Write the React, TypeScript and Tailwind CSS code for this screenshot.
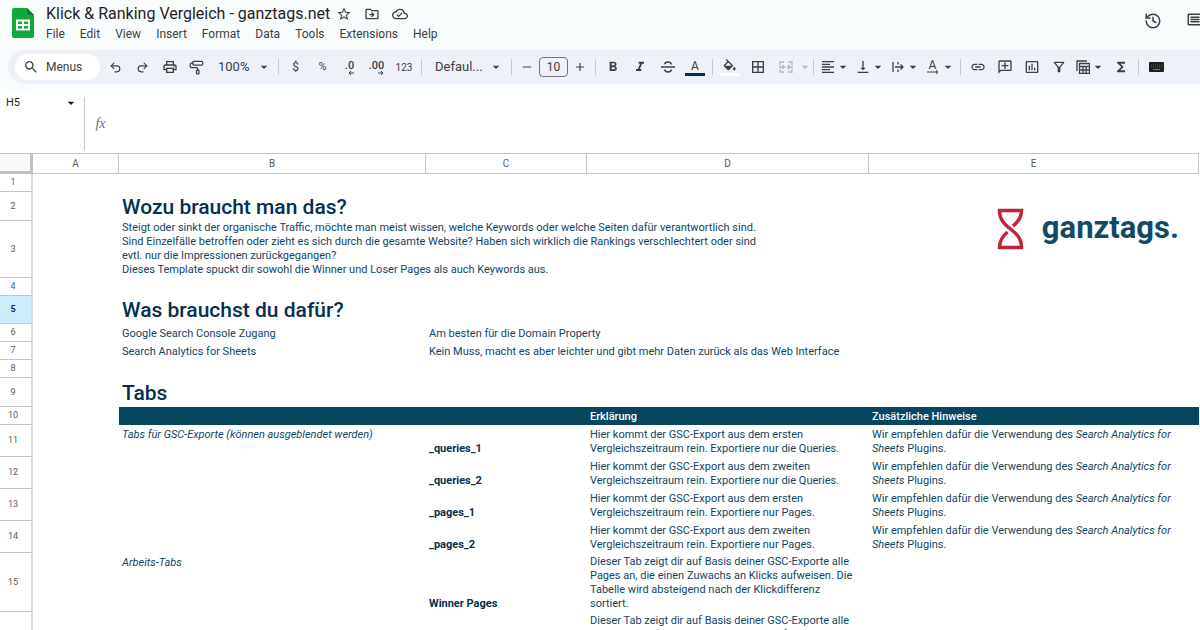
import type { ReactNode } from "react";
import { History, PaintRoller, Redo2, Undo2 } from "lucide-react";
import {
  MdAdd,
  MdArrowDropDown,
  MdBorderAll,
  MdFormatAlignLeft,
  MdFormatBold,
  MdFormatItalic,
  MdFunctions,
  MdInsertChartOutlined,
  MdLink,
  MdOutlineAddComment,
  MdOutlineCloudDone,
  MdOutlineComment,
  MdOutlineDriveFileMove,
  MdOutlineFilterAlt,
  MdOutlinePrint,
  MdRemove,
  MdSearch,
  MdStarOutline,
  MdVerticalAlignBottom,
} from "react-icons/md";

const menus = ["File", "Edit", "View", "Insert", "Format", "Data", "Tools", "Extensions", "Help"];

export default function App() {
  return (
    <div className="h-screen overflow-hidden bg-white font-[Roboto,sans-serif] text-[#1f1f1f]">
      <div className="bg-[#f9fcfd] pb-[7px]">
        <Header />
        <Toolbar />
      </div>
      <FormulaBar />
      <Sheet />
    </div>
  );
}

const Header = () => (
  <header className="flex h-[50px] items-start pl-3">
    <SheetsLogo />
    <div className="ml-3 flex-1">
      <div className="flex items-center pt-[3px]">
        <h1 className="text-[16px] leading-[22px]">Klick &amp; Ranking Vergleich - ganztags.net</h1>
        <div className="ml-[6px] flex items-center gap-3 text-[#3c4043]">
          <button aria-label="Star"><MdStarOutline className="size-4" /></button>
          <button aria-label="Move"><MdOutlineDriveFileMove className="size-4" /></button>
          <button aria-label="Document status"><MdOutlineCloudDone className="size-4" /></button>
        </div>
      </div>
      <nav className="flex gap-[15px] text-[12px] leading-[18px] text-[#3c4043]">
        {menus.map((m) => (
          <button key={m}>{m}</button>
        ))}
      </nav>
    </div>
    <div className="flex shrink-0 gap-6 overflow-hidden pt-3 text-[#3c4043]">
      <button aria-label="Version history"><History className="size-[18px]" /></button>
      <button aria-label="Comments" className="-mr-1"><MdOutlineComment className="size-[18px]" /></button>
    </div>
  </header>
);

const SheetsLogo = () => (
  <svg className="mt-2 h-[30px] w-[22px] shrink-0" viewBox="0 0 22 30">
    <path d="M2 0h13l7 7v21a2 2 0 0 1-2 2H2a2 2 0 0 1-2-2V2a2 2 0 0 1 2-2z" fill="#12a83c" />
    <path d="M15 0l7 7h-5a2 2 0 0 1-2-2z" fill="#0b7d2c" />
    <path d="M4 11.5h14v11H4z" fill="#fff" />
    <path d="M6 13.5h4v2.5H6zM12 13.5h4v2.5h-4zM6 18h4v2.500H6zM12 18h4v2.500h-4z" fill="#12a83c" />
  </svg>
);

const Caret = () => <MdArrowDropDown className="-mx-[3px] size-4 shrink-0" />;

const Divider = () => <div className="mx-[3px] h-4 w-px shrink-0 bg-[#c7cacf]" />;

const Tool = ({ label, wide, children }: { label: string; wide?: boolean; children: ReactNode }) => (
  <button
    aria-label={label}
    className={`${wide ? "w-7" : "w-[27px]"} flex h-6 shrink-0 items-center justify-center`}
  >
    {children}
  </button>
);

const DropTool = ({ label, children }: { label: string; children: ReactNode }) => (
  <button aria-label={label} className="flex h-6 w-[35px] shrink-0 items-center">
    <span className="flex w-[21px] justify-center">{children}</span>
    <Caret />
  </button>
);

const Toolbar = () => (
  <div className="ml-2 flex h-[34px] items-center overflow-hidden rounded-l-full bg-[#eef1f8] pl-[7px] text-[#3c4043]">
    <label className="flex h-[26px] w-[85px] shrink-0 items-center rounded-full bg-white pl-2">
      <MdSearch className="size-4 shrink-0" />
      <input
        aria-label="Menus"
        placeholder="Menus"
        className="ml-[7px] w-12 text-[12px] outline-none placeholder:text-[#3c4043]"
      />
    </label>
    <div className="ml-[2px] flex">
      <Tool label="Undo"><Undo2 className="size-[13px]" /></Tool>
      <Tool label="Redo"><Redo2 className="size-[13px]" /></Tool>
      <Tool label="Print"><MdOutlinePrint className="size-4" /></Tool>
      <Tool label="Paint format"><PaintRoller className="size-[15px] -scale-x-100" /></Tool>
    </div>
    <label className="flex w-[65px] shrink-0 items-center pl-2">
      <select aria-label="Zoom" className="w-[41px] appearance-none text-[13px]">
        <option>100%</option>
      </select>
      <Caret />
    </label>
    <Divider />
    <Tool label="Currency"><span className="text-[12px]">$</span></Tool>
    <Tool label="Percent"><span className="text-[11px]">%</span></Tool>
    <Tool label="Decrease decimal places"><Decimal text=".0" d="M6 2H1M3 0L1 2l2 2" /></Tool>
    <Tool label="Increase decimal places"><Decimal text=".00" d="M0 2h5M3 0l2 2-2 2" /></Tool>
    <Tool label="More formats" wide><span className="text-[10px]">123</span></Tool>
    <Divider />
    <label className="flex w-[83px] shrink-0 items-center pl-[10px]">
      <select aria-label="Font" className="w-[56px] appearance-none text-[13px]">
        <option>Defaul...</option>
      </select>
      <Caret />
    </label>
    <Divider />
    <button aria-label="Decrease font size" className="flex w-6 shrink-0 justify-center">
      <MdRemove className="size-[14px]" />
    </button>
    <input
      aria-label="Font size"
      defaultValue="10"
      className="h-5 w-[29px] shrink-0 rounded-sm border border-[#747775] text-center text-[12px]"
    />
    <button aria-label="Increase font size" className="flex w-6 shrink-0 justify-center">
      <MdAdd className="size-[14px]" />
    </button>
    <Divider />
    <Tool label="Bold"><MdFormatBold className="size-4" /></Tool>
    <Tool label="Italic" wide><MdFormatItalic className="size-4" /></Tool>
    <Tool label="Strikethrough"><StrikeIcon /></Tool>
    <Tool label="Text color" wide>
      <span className="w-5 border-b-[3px] border-[#0b2a5b] text-[12px] leading-[14px]">A</span>
    </Tool>
    <Divider />
    <Tool label="Fill color" wide>
      <span className="flex w-5 justify-center border-b-[3px] border-white pb-[2px]">
        <FillIcon />
      </span>
    </Tool>
    <Tool label="Borders" wide><MdBorderAll className="size-4" /></Tool>
    <div className="flex items-center text-[#b4b7bb]">
      <Tool label="Merge cells" wide><MergeIcon /></Tool>
      <Caret />
    </div>
    <Divider />
    <DropTool label="Horizontal align"><MdFormatAlignLeft className="size-4" /></DropTool>
    <DropTool label="Vertical align"><MdVerticalAlignBottom className="size-4" /></DropTool>
    <DropTool label="Text wrapping"><WrapIcon /></DropTool>
    <DropTool label="Text rotation">
      <span className="flex flex-col items-center text-[12px] leading-[10px]">
        A
        <svg className="h-1 w-3" viewBox="0 0 12 4" fill="none" stroke="currentColor">
          <path d="M0 2h11M9 0l2 2-2 2" />
        </svg>
      </span>
    </DropTool>
    <Divider />
    <Tool label="Insert link"><MdLink className="size-4" /></Tool>
    <Tool label="Insert comment"><MdOutlineAddComment className="size-4 -scale-x-100" /></Tool>
    <Tool label="Insert chart"><MdInsertChartOutlined className="size-4" /></Tool>
    <Tool label="Create a filter"><MdOutlineFilterAlt className="size-4" /></Tool>
    <DropTool label="Filter views"><TableViewIcon /></DropTool>
    <Tool label="Functions" wide><MdFunctions className="size-4" /></Tool>
    <Divider />
    <Tool label="Input tools" wide>
      <svg className="h-[10px] w-[15px]" viewBox="0 0 15 10">
        <rect width="15" height="10" rx="1" fill="#1f1f1f" />
        <path d="M2 3h11M2 5h11" stroke="#555" strokeDasharray="1 1" />
        <path d="M4 7.500h7" stroke="#777" />
      </svg>
    </Tool>
  </div>
);

const Decimal = ({ text, d }: { text: string; d: string }) => (
  <span className="flex flex-col items-end text-[11px] font-medium leading-[11px]">
    {text}
    <svg className="h-1 w-[6px]" viewBox="0 0 6 4" fill="none" stroke="currentColor">
      <path d={d} />
    </svg>
  </span>
);

const StrikeIcon = () => (
  <svg className="size-[14px]" viewBox="0 0 14 14" fill="none" stroke="currentColor" strokeWidth="1.400">
    <path d="M0 7h14M10.500 4.500C10 2.800 8.700 2 7 2S3.700 2.800 3.700 4.300M3.500 9.500C4 11.200 5.300 12 7 12s3.400-.8 3.400-2.400" />
  </svg>
);

const FillIcon = () => (
  <svg className="h-3 w-4" viewBox="2 0 21 18" fill="currentColor">
    <path d="M16.560 8.940L7.620 0 6.210 1.410l2.380 2.380-5.150 5.150c-.59.59-.59 1.540 0 2.120l5.500 5.500c.29.29.68.44 1.060.44s.77-.15 1.060-.44l5.500-5.500c.59-.58.59-1.530 0-2.120zM5.210 10L10 5.210 14.790 10H5.210zM19 11.500s-2 2.170-2 3.500c0 1.100.9 2 2 2s2-.9 2-2c0-1.330-2-3.500-2-3.500z" />
  </svg>
);

const MergeIcon = () => (
  <svg className="h-3 w-[14px]" viewBox="0 0 14 12" fill="none" stroke="currentColor" strokeWidth="1.300">
    <path d="M5 1H1v3M9 1h4v3M5 11H1V8M9 11h4V8M0 6h5M3.500 4L5.500 6l-2 2M14 6H9M10.500 4l-2 2 2 2" />
  </svg>
);

const WrapIcon = () => (
  <svg className="h-3 w-3" viewBox="0 0 12 12" fill="none" stroke="currentColor" strokeWidth="1.300">
    <path d="M1 1v10M6 1v2.500M6 8.500V11M3 6h8M8.500 3.500L11 6 8.500 8.500" />
  </svg>
);

const TableViewIcon = () => (
  <svg className="size-[14px]" viewBox="0 0 14 14" fill="none" stroke="currentColor" strokeWidth="1.300">
    <path d="M1 11V1h10M3.500 3.500h10v10h-10zM3.500 6.500h10M3.500 10h10M7 6.500v7M10.200 6.500v7" />
  </svg>
);

const FormulaBar = () => (
  <div className="flex h-[62px] pt-[6px]">
    <div className="flex h-[53px] w-[85px] shrink-0 items-start border-r border-[#c4c7c9] pl-[6px]">
      <input aria-label="Name box" defaultValue="H5" className="h-3 w-[60px] text-[11px] outline-none" />
      <button aria-label="Named ranges" className="flex h-3 items-center"><Caret /></button>
    </div>
    <label className="flex h-[52px] flex-1 items-center">
      <span className="w-[31px] text-center font-['Liberation_Serif',serif] text-[14px] italic text-[#70757a]">fx</span>
      <input aria-label="Formula" className="flex-1 outline-none" />
    </label>
  </div>
);

const line = "border-[#c4c7c9]";

const ColHead = ({ name }: { name: string }) => (
  <th scope="col" className={`${line} border-y border-r p-0 text-[10px] font-normal text-[#575b5f]`}>
    {name}
  </th>
);

// numbered header at the left of every row, also sets the row's height
const RowHead = ({ n, h, active }: { n: number; h: string; active?: boolean }) => (
  <th
    scope="row"
    className={`${h} ${line} border-b border-r-2 border-r-[#d8dbdd] p-0 pr-[5px] text-center text-[9px] leading-none ${
      active ? "bg-[#cdebfa] font-bold text-[#0b2a5b]" : "font-normal text-[#575b5f]"
    }`}
  >
    {n}
  </th>
);

const Title = ({ children }: { children: ReactNode }) => (
  <td colSpan={3} className="p-0 pl-[3px]">
    <h2 className="text-[21px] font-medium leading-[26px] text-[#03304f]">{children}</h2>
  </td>
);

const Cell = ({ span, className = "", children }: { span?: number; className?: string; children?: ReactNode }) => (
  <td colSpan={span} className={`${className} p-0 pb-px pl-[3px] align-bottom`}>
    {children}
  </td>
);

// first column of a block of tabs, sits at the top of its row
const Group = ({ children }: { children?: ReactNode }) => (
  <td className="p-0 pl-[3px] align-top italic leading-5">{children}</td>
);

const TabName = ({ children }: { children: ReactNode }) => (
  <Cell className="font-bold text-[#03304f]">{children}</Cell>
);

const exportRows = [
  { n: 11, group: "Tabs für GSC-Exporte (können ausgeblendet werden)", tab: "_queries_1", nth: "ersten", what: "die Queries" },
  { n: 12, group: "", tab: "_queries_2", nth: "zweiten", what: "die Queries" },
  { n: 13, group: "", tab: "_pages_1", nth: "ersten", what: "Pages" },
  { n: 14, group: "", tab: "_pages_2", nth: "zweiten", what: "Pages" },
];

const Sheet = () => (
  <div className="pr-px">
    <table className="w-full table-fixed border-separate border-spacing-0 text-left text-[11px] leading-[14px] text-[#12455f]">
      <colgroup>
        <col className="w-[33px]" />
        <col className="w-[86px]" />
        <col className="w-[307px]" />
        <col className="w-[161px]" />
        <col className="w-[282px]" />
        <col />
      </colgroup>
      <thead>
        <tr className="text-center">
          <td className="h-[21px] border-b-[3px] border-r-[3px] border-t border-[#bdc0c3] border-t-[#c4c7c9] bg-[#f8f9fa] p-0" />
          <ColHead name="A" />
          <ColHead name="B" />
          <ColHead name="C" />
          <ColHead name="D" />
          <ColHead name="E" />
        </tr>
      </thead>
      <tbody>
        <tr>
          <RowHead n={1} h="h-[18px]" />
        </tr>
        <tr>
          <RowHead n={2} h="h-[29px]" />
          <td />
          <Title>Wozu braucht man das?</Title>
          <td rowSpan={2} className="p-0 pt-4 align-top">
            <Brand />
          </td>
        </tr>
        <tr>
          <RowHead n={3} h="h-[57px]" />
          <td />
          <Cell span={3}>
            Steigt oder sinkt der organische Traffic, möchte man meist wissen, welche Keywords oder welche Seiten dafür
            verantwortlich sind.
            <br />
            Sind Einzelfälle betroffen oder zieht es sich durch die gesamte Website? Haben sich wirklich die Rankings
            verschlechtert oder sind
            <br />
            evtl. nur die Impressionen zurückgegangen?
            <br />
            Dieses Template spuckt dir sowohl die Winner und Loser Pages als auch Keywords aus.
          </Cell>
        </tr>
        <tr>
          <RowHead n={4} h="h-[18px]" />
        </tr>
        <tr>
          <RowHead n={5} h="h-[28px]" active />
          <td />
          <Title>Was brauchst du dafür?</Title>
        </tr>
        <tr>
          <RowHead n={6} h="h-[18px]" />
          <td />
          <Cell>Google Search Console Zugang</Cell>
          <Cell span={2}>Am besten für die Domain Property</Cell>
        </tr>
        <tr>
          <RowHead n={7} h="h-[18px]" />
          <td />
          <Cell>Search Analytics for Sheets</Cell>
          <Cell span={2}>Kein Muss, macht es aber leichter und gibt mehr Daten zurück als das Web Interface</Cell>
        </tr>
        <tr>
          <RowHead n={8} h="h-[18px]" />
        </tr>
        <tr>
          <RowHead n={9} h="h-[29px]" />
          <td />
          <Title>Tabs</Title>
        </tr>
        <tr className="font-medium text-white">
          <RowHead n={10} h="h-[18px]" />
          <td />
          <Cell span={2} className="bg-[#04475f]" />
          <Cell className="bg-[#04475f]">Erklärung</Cell>
          <Cell className="bg-[#04475f]">Zusätzliche Hinweise</Cell>
        </tr>
        {exportRows.map((r) => (
          <tr key={r.n}>
            <RowHead n={r.n} h="h-[32px]" />
            <td />
            <Group>{r.group}</Group>
            <TabName>{r.tab}</TabName>
            <Cell>
              Hier kommt der GSC-Export aus dem {r.nth}
              <br />
              Vergleichszeitraum rein. Exportiere nur {r.what}.
            </Cell>
            <Cell>
              Wir empfehlen dafür die Verwendung des <i>Search Analytics for</i>
              <br />
              <i>Sheets</i> Plugins.
            </Cell>
          </tr>
        ))}
        <tr>
          <RowHead n={15} h="h-[59px]" />
          <td />
          <Group>Arbeits-Tabs</Group>
          <TabName>Winner Pages</TabName>
          <Cell>
            Dieser Tab zeigt dir auf Basis deiner GSC-Exporte alle
            <br />
            Pages an, die einen Zuwachs an Klicks aufweisen. Die
            <br />
            Tabelle wird absteigend nach der Klickdifferenz
            <br />
            sortiert.
          </Cell>
        </tr>
        <tr>
          <RowHead n={16} h="h-[59px]" />
          <td />
          <Group />
          <td />
          <Cell>
            Dieser Tab zeigt dir auf Basis deiner GSC-Exporte alle
            <br />
            Pages an, die einen Verlust an Klicks aufweisen. Die
            <br />
            Tabelle wird absteigend nach der Klickdifferenz
            <br />
            sortiert.
          </Cell>
        </tr>
      </tbody>
    </table>
  </div>
);

const Brand = () => (
  <div className="flex items-start justify-end gap-[18px] pr-5">
    <svg className="h-[42px] w-[27px]" viewBox="0 0 27 42" fill="none" stroke="#be2638" strokeWidth="3.500">
      <path d="M16 18C21 14 24.500 9 24.500 2.500H2.500C2.500 22 24.500 20 24.500 39.500H2.500C2.500 33 5.500 28 10.500 24" />
    </svg>
    <span className="text-[31px] font-bold leading-10 text-[#104a63]">ganztags.</span>
  </div>
);
